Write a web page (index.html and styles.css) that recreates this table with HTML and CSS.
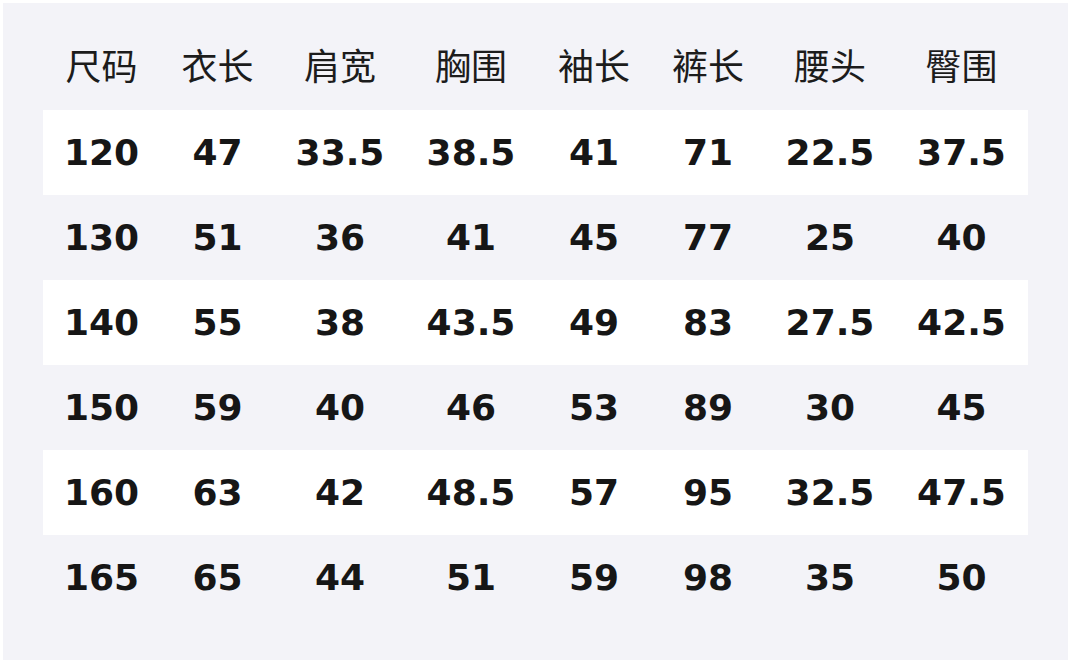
FILE: index.html
```html
<!DOCTYPE html>
<html lang="zh">
<head>
<meta charset="utf-8">
<link rel="stylesheet" href="styles.css">
</head>
<body>
<div class="panel">
<table class="sizes">
<colgroup>
<col class="c1"><col class="c2"><col class="c3"><col class="c4"><col class="c5"><col class="c6"><col class="c7"><col class="c8">
</colgroup>
<thead>
<tr><th>尺码</th><th>衣长</th><th>肩宽</th><th>胸围</th><th>袖长</th><th>裤长</th><th>腰头</th><th>臀围</th></tr>
</thead>
<tbody>
<tr><td>120</td><td>47</td><td>33.5</td><td>38.5</td><td>41</td><td>71</td><td>22.5</td><td>37.5</td></tr>
<tr><td>130</td><td>51</td><td>36</td><td>41</td><td>45</td><td>77</td><td>25</td><td>40</td></tr>
<tr><td>140</td><td>55</td><td>38</td><td>43.5</td><td>49</td><td>83</td><td>27.5</td><td>42.5</td></tr>
<tr><td>150</td><td>59</td><td>40</td><td>46</td><td>53</td><td>89</td><td>30</td><td>45</td></tr>
<tr><td>160</td><td>63</td><td>42</td><td>48.5</td><td>57</td><td>95</td><td>32.5</td><td>47.5</td></tr>
<tr><td>165</td><td>65</td><td>44</td><td>51</td><td>59</td><td>98</td><td>35</td><td>50</td></tr>
</tbody>
</table>
</div>
</body>
</html>
```
FILE: styles.css
```css
html, body {
  margin: 0;
  padding: 0;
  background: #ffffff;
}
.panel {
  margin: 3px;
  width: 985px;
  height: 595px;
  padding: 22px 40px 40px 40px;
  background: #f3f3f8;
}
.sizes {
  border-collapse: collapse;
  table-layout: fixed;
  width: 985px;
  color: #161616;
}
.c1 { width: 117px; }
.c2 { width: 115px; }
.c3 { width: 130px; }
.c4 { width: 132px; }
.c5 { width: 114px; }
.c6 { width: 114px; }
.c7 { width: 130px; }
.c8 { width: 133px; }
.sizes th, .sizes td {
  height: 85px;
  padding: 0;
  text-align: center;
  vertical-align: middle;
  font-size: 36px;
  line-height: 1;
}
.sizes th {
  height: 77px;
  padding-bottom: 8px;
  font-family: "Noto Sans CJK SC", "DejaVu Sans", sans-serif;
  font-weight: 400;
  color: #1c1c1c;
}
.sizes td {
  font-family: "DejaVu Sans", sans-serif;
  font-weight: 700;
}
.sizes tbody tr:nth-child(odd) {
  background: #ffffff;
}
```
